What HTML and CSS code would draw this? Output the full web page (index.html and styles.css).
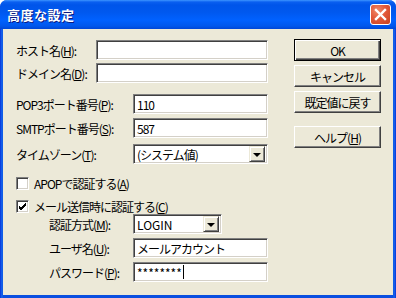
FILE: index.html
```html
<!DOCTYPE html>
<html lang="ja">
<head>
<meta charset="utf-8">
<title>高度な設定</title>
<link rel="stylesheet" href="styles.css">
</head>
<body>
<div class="window">
  <div class="titlebar">
    <span class="title">高度な設定</span>
    <span class="close">
      <svg width="13" height="13" viewBox="0 0 13 13"><path d="M2 2 L11 11 M11 2 L2 11" stroke="#fff" stroke-width="2.4" stroke-linecap="square"/></svg>
    </span>
  </div>
  <div class="client">
    <div class="form">
      <div class="row r-host"><span class="lab lab-a">ホスト名(<u>H</u>):</span><span class="edit e-wide"></span></div>
      <div class="row r-domain"><span class="lab lab-a">ドメイン名(<u>D</u>):</span><span class="edit e-wide"></span></div>
      <div class="row r-pop"><span class="lab lab-b">POP3ポート番号(<u>P</u>):</span><span class="edit e-mid">110</span></div>
      <div class="row r-smtp"><span class="lab lab-b">SMTPポート番号(<u>S</u>):</span><span class="edit e-mid">587</span></div>
      <div class="row r-tz"><span class="lab lab-b">タイムゾーン(<u>T</u>):</span><span class="combo e-mid"><span class="ctext">(システム値)</span><span class="drop"><span class="tri"></span></span></span></div>
      <div class="row check r-apop"><span class="box"></span><span class="clab">APOPで認証する(<u>A</u>)</span></div>
      <div class="row check r-mail"><span class="box"><svg width="9" height="9" viewBox="0 0 9 9"><path d="M1 4 L3 6 L8 1 M1 5 L3 7 L8 2 M1 6 L3 8 L8 3" stroke="#000" stroke-width="1" fill="none"/></svg></span><span class="clab">メール送信時に認証する(<u>C</u>)</span></div>
      <div class="row sub r-auth"><span class="lab lab-c">認証方式(<u>M</u>):</span><span class="combo e-small"><span class="ctext latin">LOGIN</span><span class="drop"><span class="tri"></span></span></span></div>
      <div class="row sub r-user"><span class="lab lab-c">ユーザ名(<u>U</u>):</span><span class="edit e-mid">メールアカウント</span></div>
      <div class="row sub r-pass"><span class="lab lab-c">パスワード(<u>P</u>):</span><span class="edit e-mid latin">********<span class="caret"></span></span></div>
    </div>
    <div class="buttons">
      <span class="btn default">OK</span>
      <span class="btn">キャンセル</span>
      <span class="btn">既定値に戻す</span>
      <span class="btn help">ヘルプ(<u>H</u>)</span>
    </div>
  </div>
</div>
</body>
</html>
```

FILE: styles.css
```css
* { box-sizing: border-box; }
html, body { margin: 0; padding: 0; background: #ffffff; }
body {
  font-family: "Noto Sans CJK JP", "Liberation Sans", sans-serif;
  font-size: 12px;
  color: #000;
}
u { text-decoration: underline; text-underline-offset: 1px; }

.window {
  width: 396px;
  height: 298px;
  display: flex;
  flex-direction: column;
  background: linear-gradient(90deg, #0831D9 0, #166AEE 2px, #0A4FE0 3px, #0A4FE0 393px, #166AEE 394px, #0831D9 396px);
  border-radius: 7px 7px 0 0;
  overflow: hidden;
}

.titlebar {
  flex: none;
  height: 29px;
  display: flex;
  align-items: center;
  padding: 0 5px 0 7px;
  background: linear-gradient(#3D95FF 0, #0A5FF0 2px, #0055EA 5px, #0058EE 12px, #0061FF 20px, #0057EC 26px, #0046D6 29px);
}
.title {
  color: #fff;
  font-weight: bold;
  font-size: 13px;
  line-height: 14px;
  letter-spacing: 0.5px;
  text-shadow: 1px 1px 0 #0A1A80;
  margin-top: 1px;
}
.close {
  margin-left: auto;
  width: 21px;
  height: 21px;
  border: 1px solid #fff;
  border-radius: 3px;
  background: radial-gradient(circle at 35% 30%, #F08A6A 0, #E2593A 45%, #C8401E 100%);
  display: flex;
  align-items: center;
  justify-content: center;
}

.client {
  flex: 1;
  margin: 0 3px 3px 3px;
  background: #ECE9D8;
  display: flex;
  padding: 11px 12px 0 13px;
  letter-spacing: -1px;
}
.latin { letter-spacing: 0; }

.form { display: flex; flex-direction: column; }
.row { display: flex; align-items: center; height: 20px; }
.lab { flex: none; line-height: 13px; }
.lab-a { width: 80px; }
.lab-b { width: 117px; }
.lab-c { width: 84px; }
.sub { padding-left: 33px; }

.r-domain { margin-top: 3px; }
.r-pop { margin-top: 11px; }
.r-smtp { margin-top: 4px; }
.r-tz { margin-top: 6px; }
.r-apop { margin-top: 13px; height: 13px; }
.r-mail { margin-top: 10px; height: 13px; }
.r-auth { margin-top: 1px; }
.r-user { margin-top: 4px; }
.r-pass { margin-top: 4px; }

.edit, .combo {
  height: 20px;
  background: #fff;
  border-top: 1px solid #808080;
  border-left: 1px solid #808080;
  border-bottom: 1px solid #fff;
  border-right: 1px solid #fff;
  box-shadow: inset 1px 1px 0 #404040, inset -1px -1px 0 #D4D0C8;
  display: flex;
  align-items: center;
  padding-left: 3px;
  line-height: 13px;
  white-space: nowrap;
}
.e-wide { width: 172px; }
.e-mid { width: 135px; }
.e-small { width: 89px; }

.caret {
  display: inline-block;
  width: 1px;
  height: 14px;
  background: #000;
  margin-left: 1px;
}

.combo { padding-right: 2px; }
.ctext { flex: 1; }
.drop {
  width: 16px;
  height: 16px;
  background: #ECE9D8;
  border-top: 1px solid #ECE9D8;
  border-left: 1px solid #ECE9D8;
  border-right: 1px solid #404040;
  border-bottom: 1px solid #404040;
  box-shadow: inset 1px 1px 0 #fff, inset -1px -1px 0 #808080;
  display: flex;
  align-items: center;
  justify-content: center;
}
.tri {
  width: 0;
  height: 0;
  border-left: 4px solid transparent;
  border-right: 4px solid transparent;
  border-top: 4px solid #000;
  margin-top: 1px;
}

.box {
  width: 13px;
  height: 13px;
  background: #fff;
  border-top: 1px solid #808080;
  border-left: 1px solid #808080;
  border-bottom: 1px solid #fff;
  border-right: 1px solid #fff;
  box-shadow: inset 1px 1px 0 #404040, inset -1px -1px 0 #D4D0C8;
  display: flex;
  align-items: center;
  justify-content: center;
  flex: none;
}
.clab { margin-left: 5px; line-height: 13px; }

.buttons {
  margin-left: auto;
  margin-top: -1px;
  display: flex;
  flex-direction: column;
  width: 87px;
}
.btn {
  height: 22px;
  display: flex;
  align-items: center;
  justify-content: center;
  background: #ECE9D8;
  border-top: 1px solid #fff;
  border-left: 1px solid #fff;
  border-right: 1px solid #404040;
  border-bottom: 1px solid #404040;
  box-shadow: inset -1px -1px 0 #808080;
  line-height: 13px;
  margin-bottom: 4px;
}
.btn.default {
  border: 1px solid #000;
  box-shadow: inset 1px 1px 0 #fff, inset -1px -1px 0 #404040, inset -2px -2px 0 #808080;
}
.btn.help { margin-top: 9px; }
```
